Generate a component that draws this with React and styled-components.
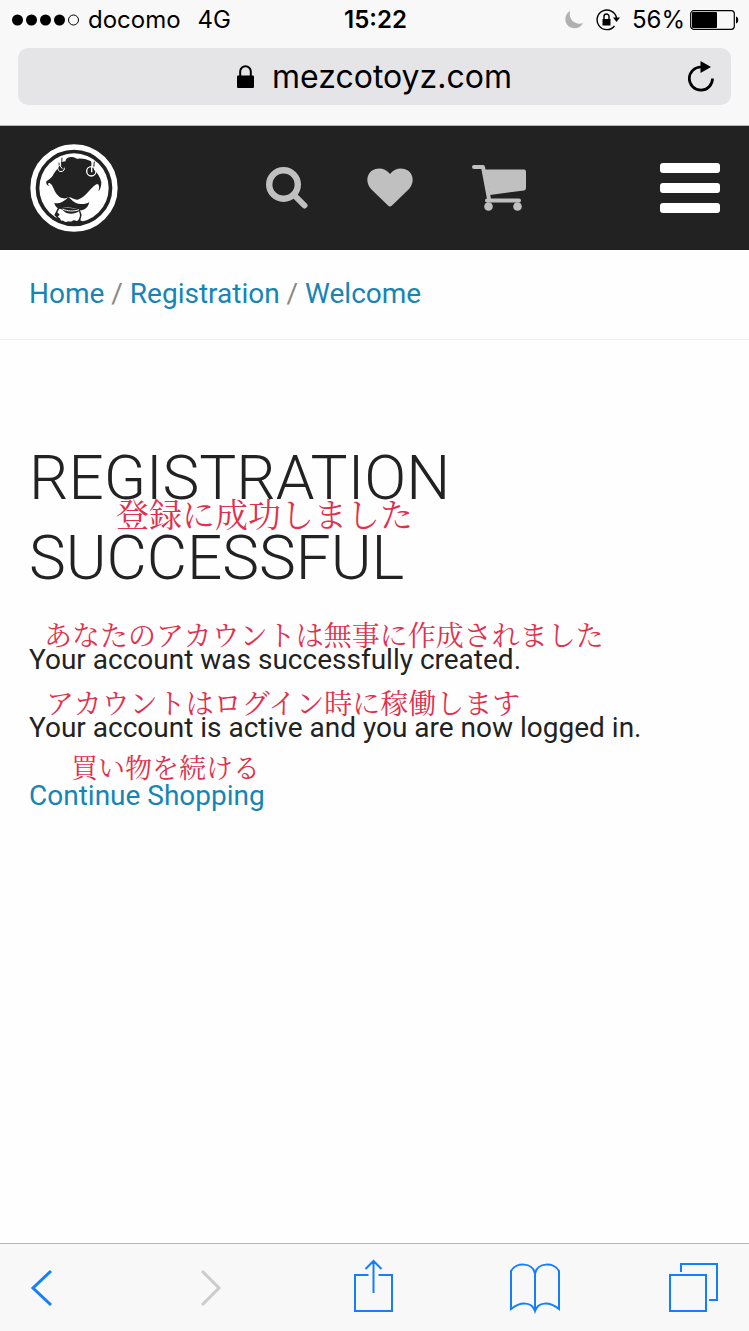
import React from 'react';
import styled, { createGlobalStyle } from 'styled-components';

function StatusBar() {
    return (
        <StatusWrapper>
            <StatusGroup $gap="9px">
                <svg width="67" height="12" viewBox="0 0 67 12">
                    {[5.5, 19.5, 33.5, 47.5].map((x) => <circle key={x} cx={x} cy="6" r="5.5" />)}
                    <circle cx="61.5" cy="6" r="5" fill="none" stroke="#000" />
                </svg>
                <span>docomo</span>
                <Network>4G</Network>
            </StatusGroup>
            <Time>15:22</Time>
            <StatusGroup $gap="12px" $end>
                <svg width="20" height="20" viewBox="0 0 20 20">
                    <path d="M6 1C1 4 0 10 3 14.500C7 20 16 19.500 19 13C13 15.500 4 11 6 1Z" fill="#b0b0b2" />
                </svg>
                <svg width="24" height="22" viewBox="0 0 24 22">
                    <path d="M18.500 17A9.800 9.800 0 1 1 20.500 9" fill="none" stroke="#000" strokeWidth="1.400" />
                    <path d="M17 8.500h7l-3.500 4.500z" />
                    <path d="M6.500 10h8v6.500h-8z" />
                    <path d="M8 10V7.500a2.500 2.500 0 0 1 5 0V10" fill="none" stroke="#000" strokeWidth="1.400" />
                </svg>
                <Battery>
                    <span>56%</span>
                    <svg width="49" height="20" viewBox="0 0 49 20">
                        <rect x=".7" y=".7" width="43.600" height="18.600" rx="3" fill="none" stroke="#000" strokeWidth="1.200" />
                        <rect x="2" y="2" width="25" height="16" rx="1" />
                        <path d="M46 6.500c3 .5 3 6.500 0 7z" />
                    </svg>
                </Battery>
            </StatusGroup>
        </StatusWrapper>
    );
}

function AddressBar() {
    return (
        <AddressWrapper>
            <AddressBox>
                <Address>
                    <svg width="17" height="23" viewBox="0 0 17 23">
                        <rect y="10.500" width="17" height="12.500" rx="1" />
                        <path d="M3.200 11V6.500a5.300 5.300 0 0 1 10.600 0V11" fill="none" stroke="#000" strokeWidth="2" />
                    </svg>
                    <AddressInput aria-label="Address" defaultValue="mezcotoyz.com" size={13} />
                </Address>
                <Reload type="button" aria-label="Reload">
                    <svg width="28" height="32" viewBox="0 0 28 32">
                        <path d="M25.500 17.500A11.600 11.600 0 1 1 14 6" fill="none" stroke="#000" strokeWidth="2.700" />
                        <path d="M13.500 0L24 6L13.500 12Z" />
                    </svg>
                </Reload>
            </AddressBox>
        </AddressWrapper>
    );
}

function Logo() {
    return (
        <svg width="88" height="88" viewBox="33 27 264 264">
            <circle cx="165" cy="159" r="123" fill="none" stroke="#fff" strokeWidth="16" />
            <circle cx="165" cy="159" r="104" fill="#fff" />
            {/* hat and face */}
            <path fill="#222" d="M119 82C124 86 130 80 140 79C138 70 150 66 158 66C166 65 170 72 178 71C192 70 206 74 216 79L226 106C236 114 244 128 247 142C247 154 244 164 238 169C242 158 241 150 236 147C228 148 220 158 210 168C200 179 190 190 176 194C166 195 158 187 149 187C142 191 132 192 122 186C110 178 106 164 99 151C96 145 90 142 88 145C86 149 89 152 93 151C86 155 80 148 82 139C88 135 96 130 101 122C106 112 114 104 119 96Z" />
            {/* moustache */}
            <path fill="#222" d="M149 186C158 195 168 206 184 207C195 208 204 206 211 202C207 218 196 227 182 226C168 216 136 216 122 221C112 219 107 211 106 203C116 208 132 203 149 186Z" />
            {/* beard */}
            <path fill="#222" d="M118 216L182 222L188 240L184 256L196 262C176 272 146 272 124 260L106 240Z" />
            <path fill="#fff" d="M121 221C129 220 133 228 141 233C153 238 169 237 180 229C184 238 184 247 178 255C172 262 168 253 161 257C154 263 148 257 142 261C136 263 132 253 127 258L122 249L116 245L122 239L115 232Z" />
            <path d="M130 222C146 229 164 230 180 224" fill="none" stroke="#fff" strokeWidth="3" />
            {/* goggles hanging from the brim */}
            <path d="M124 70L124 92M221 74L219 98" stroke="#fff" strokeWidth="5" />
            <path d="M129 68L128 88M226 80L224 98" stroke="#222" strokeWidth="3" />
            <g fill="none" stroke="#fff">
                <path d="M120 92A10 10 0 1 0 136 98" strokeWidth="3" />
                <path d="M122 91L130 101" strokeWidth="3" />
                <circle cx="217" cy="109" r="14" strokeWidth="4" />
                <path d="M218 97V112" strokeWidth="4" />
            </g>
        </svg>
    );
}

function Header() {
    return (
        <HeaderWrapper>
            <HeaderLink href="#home" aria-label="Mezco Toyz"><Logo /></HeaderLink>
            <HeaderNav>
                <HeaderLink href="#search" aria-label="Search">
                    <svg width="42" height="42" viewBox="0 0 42 42" fill="none" stroke="#c0c0c0">
                        <circle cx="17.500" cy="17.500" r="14.300" strokeWidth="6.400" />
                        <path d="M28 28L38.500 38.500" strokeWidth="6" strokeLinecap="round" />
                    </svg>
                </HeaderLink>
                <HeaderLink href="#wishlist" aria-label="Wish list">
                    <svg width="46" height="42" viewBox="0 0 46 42">
                        <path fill="#c0c0c0" d="M23 39.500Q22 39.500 21 38.500L4 22C-2 15 0 7 5 3.500C11 0 18 1 23 7C28 1 35 0 41 3.500C46 7 48 15 42 22L25 38.500Q24 39.500 23 39.500Z" />
                    </svg>
                </HeaderLink>
                <HeaderLink href="#cart" aria-label="Cart">
                    <svg width="54" height="46" viewBox="0 0 54 46" fill="#c0c0c0">
                        <path d="M2 2H11L17 34M15 35.500H47" fill="none" stroke="#c0c0c0" strokeWidth="4" strokeLinecap="round" strokeLinejoin="round" />
                        <path d="M12 4.500H52Q54 4.500 54 6.500V23Q54 25 52 25.500L18 30Z" />
                        <circle cx="16.500" cy="41.500" r="4.300" />
                        <circle cx="45.500" cy="41.500" r="4.300" />
                    </svg>
                </HeaderLink>
            </HeaderNav>
            <MenuButton type="button" aria-label="Menu">
                <MenuLine />
                <MenuLine />
                <MenuLine />
            </MenuButton>
        </HeaderWrapper>
    );
}

function Toolbar() {
    return (
        <ToolbarWrapper>
            <ToolButton type="button" aria-label="Back">
                <svg viewBox="0 0 60 56"><path d="M32 12L14 29L32 46" strokeWidth="3" /></svg>
            </ToolButton>
            <ToolButton type="button" aria-label="Forward" disabled>
                <svg viewBox="0 0 60 56"><path d="M22 12L39 29L22 46" strokeWidth="3" /></svg>
            </ToolButton>
            <ToolButton type="button" aria-label="Share">
                <svg viewBox="0 0 60 56">
                    <path d="M26.500 16H13V52H50V16H36.500M31.500 34V2M23.500 10L31.500 2L39.500 10" />
                </svg>
            </ToolButton>
            <ToolButton type="button" aria-label="Bookmarks">
                <svg viewBox="0 0 60 56">
                    <path d="M32 52V15C30 3 13 3 8 12V50C18 42 29 43 32 52C35 43 46 42 56 50V12C51 3 34 3 32 15" />
                </svg>
            </ToolButton>
            <ToolButton type="button" aria-label="Tabs">
                <svg viewBox="0 0 60 56">
                    <path d="M6 16H42V52H6ZM17 13V5H53V41H45" />
                </svg>
            </ToolButton>
        </ToolbarWrapper>
    );
}

function App() {
    return (
        <Page>
            <GlobalStyle />
            <StatusBar />
            <AddressBar />
            <Header />
            <Breadcrumb aria-label="Breadcrumb">
                <TextLink href="#home">Home</TextLink> / <TextLink href="#registration">Registration</TextLink> / <TextLink href="#welcome">Welcome</TextLink>
            </Breadcrumb>
            <Content>
                <Title>
                    REGISTRATION SUCCESSFUL
                    <Note $size="33px" $top="55px" $left="87px">登録に成功しました</Note>
                </Title>
                <Text>
                    Your account was successfully created.
                    <Note $left="15px">あなたのアカウントは無事に作成されました</Note>
                </Text>
                <Text>
                    Your account is active and you are now logged in.
                    <Note $left="17px">アカウントはログイン時に稼働します</Note>
                </Text>
                <Text>
                    <TextLink href="#shop">Continue Shopping</TextLink>
                    <Note $size="27px" $top="-27px" $left="42px">買い物を続ける</Note>
                </Text>
            </Content>
            <Toolbar />
        </Page>
    );
}

const GlobalStyle = createGlobalStyle`
    *{
        box-sizing: border-box;
    }
    body{
        margin: 0;
        background: #fefefe;
    }
    svg{
        display: block;
    }
    button{
        padding: 0;
        border: 0;
        background: none;
        cursor: pointer;
    }
`

const Page = styled.div`
    display: flex;
    flex-direction: column;
    min-height: 100vh;
    font-family: Roboto, sans-serif;
    color: #222;
`

const StatusWrapper = styled.div`
    display: grid;
    grid-template-columns: 1fr auto 1fr;
    align-items: center;
    height: 40px;
    padding: 0 10px 0 12px;
    background: #f8f8f8;
    color: #000;
    font-family: Inter, sans-serif;
    font-size: 24px;
    line-height: 38px;
`

const StatusGroup = styled.div`
    display: flex;
    align-items: center;
    justify-content: ${(props) => (props.$end ? 'flex-end' : 'flex-start')};
    gap: ${(props) => props.$gap};
`

const Network = styled.span`
    margin-left: 8px;
`

const Time = styled.span`
    font-weight: 600;
`

const Battery = styled.div`
    display: flex;
    align-items: center;
    gap: 5px;
`

const AddressWrapper = styled.div`
    padding: 8px 18px 20px;
    background: #f8f8f8;
    border-bottom: 1px solid #b8b8ba;
`

const AddressBox = styled.div`
    display: grid;
    grid-template-columns: 1fr auto 1fr;
    align-items: center;
    height: 57px;
    padding: 0 16px;
    border-radius: 10px;
    background: #e5e5e7;
`

const Address = styled.label`
    display: flex;
    grid-column: 2;
    align-items: center;
    gap: 18px;
`

const AddressInput = styled.input`
    field-sizing: content;
    padding: 0;
    border: 0;
    outline: 0;
    background: none;
    color: #000;
    font-family: Inter, sans-serif;
    font-size: 32px;
`

const Reload = styled.button`
    justify-self: end;
`

const HeaderWrapper = styled.header`
    display: flex;
    align-items: center;
    height: 124px;
    padding: 0 29px 0 30px;
    background: #222;
`

const HeaderLink = styled.a`
    display: block;
`

const HeaderNav = styled.nav`
    display: flex;
    flex: 1;
    align-items: center;
    gap: 59px;
    margin-left: 148px;
`

const MenuButton = styled.button`
    display: grid;
    gap: 10px;
    width: 60px;
`

const MenuLine = styled.span`
    height: 10px;
    border-radius: 3px;
    background: #fff;
`

const Breadcrumb = styled.nav`
    padding: 22px 29px 23px;
    border-bottom: 1px solid #eee;
    color: #888;
    font-size: 28px;
    line-height: 44px;
`

const TextLink = styled.a`
    color: #1585b5;
    text-decoration: none;
`

const Content = styled.main`
    flex: 1;
    padding: 98px 29px 40px;
`

const Title = styled.h1`
    position: relative;
    margin: 0 0 40px;
    font-size: 62px;
    font-weight: 300;
    line-height: 80px;
`

const Text = styled.p`
    position: relative;
    margin: 0 0 24px;
    font-size: 28px;
    line-height: 44px;
`

/* translation laid over the line it explains */
const Note = styled.span`
    position: absolute;
    top: ${(props) => props.$top || '-24px'};
    left: ${(props) => props.$left};
    color: #e2304c;
    font-family: "Noto Serif CJK JP", "Noto Sans CJK JP", serif;
    font-size: ${(props) => props.$size || '28px'};
    font-weight: 400;
    line-height: 40px;
    white-space: nowrap;
`

const ToolbarWrapper = styled.footer`
    position: sticky;
    bottom: 0;
    display: flex;
    justify-content: space-between;
    height: 88px;
    padding: 15px 25px 0 19px;
    border-top: 1px solid #b8b8ba;
    background: #f8f8f8;
`

const ToolButton = styled.button`
    width: 60px;
    height: 56px;
    color: #147efb;
    svg{
        fill: none;
        stroke: currentColor;
        stroke-width: 2;
    }
    &:disabled{
        color: #ccc;
    }
`

export default App;
